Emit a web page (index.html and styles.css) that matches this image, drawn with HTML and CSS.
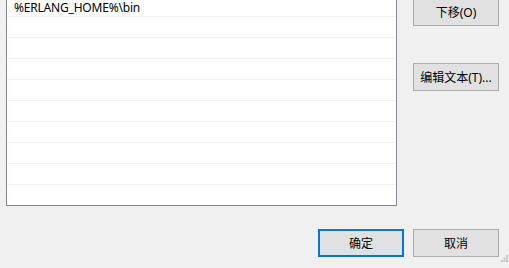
FILE: index.html
```html
<!DOCTYPE html>
<html lang="zh-CN">
<head>
<meta charset="utf-8">
<title>编辑环境变量</title>
<link rel="stylesheet" href="styles.css">
</head>
<body>
<div class="dialog">
  <div class="main">
    <div class="list">
      <div class="row">%ERLANG_HOME%\bin</div>
      <div class="row"></div>
      <div class="row"></div>
      <div class="row"></div>
      <div class="row"></div>
      <div class="row"></div>
      <div class="row"></div>
      <div class="row"></div>
      <div class="row"></div>
      <div class="row"></div>
    </div>
    <div class="side">
      <button class="btn">下移(O)</button>
      <button class="btn">编辑文本(T)...</button>
    </div>
  </div>
  <div class="footer">
    <button class="btn btn-default">确定</button>
    <button class="btn">取消</button>
  </div>
  <svg class="grip" width="7" height="7" viewBox="0 0 7 7">
    <rect x="5" y="0" width="2" height="2" fill="#c4c4c4"/>
    <rect x="2.5" y="2.5" width="2" height="2" fill="#c4c4c4"/>
    <rect x="5" y="2.5" width="2" height="2" fill="#c4c4c4"/>
    <rect x="0" y="5" width="2" height="2" fill="#c4c4c4"/>
    <rect x="2.5" y="5" width="2" height="2" fill="#c4c4c4"/>
    <rect x="5" y="5" width="2" height="2" fill="#c4c4c4"/>
  </svg>
</div>
</body>
</html>
```

FILE: styles.css
```css
html, body {
  margin: 0;
  padding: 0;
  background: #f0f0f0;
  overflow: hidden;
}

.dialog {
  position: relative;
  width: 509px;
  height: 268px;
  font-family: "Noto Sans", "Noto Sans CJK SC", sans-serif;
  font-size: 12px;
  color: #000;
}

.main {
  display: flex;
  margin-top: -5px;
}

.list {
  margin-left: 6px;
  width: 391px;
  height: 211px;
  box-sizing: border-box;
  border: 1px solid #828790;
  background: #fff;
  overflow: hidden;
}

.row {
  height: 18px;
  padding-top: 2px;
  line-height: 20px;
  border-bottom: 1px solid #f0f0f0;
  padding-left: 7px;
  white-space: nowrap;
  letter-spacing: -0.2px;
}

.side {
  display: flex;
  flex-direction: column;
  gap: 37px;
  margin-left: 16px;
  padding-top: 3px;
}

.btn {
  width: 86px;
  height: 28px;
  box-sizing: border-box;
  border: 1px solid #adadad;
  background: #e1e1e1;
  font-family: "Noto Sans", "Noto Sans CJK SC", sans-serif;
  font-size: 12px;
  color: #000;
  padding: 0;
  margin: 0;
}

.btn-default {
  border: 2px solid #0078d7;
}

.footer {
  display: flex;
  justify-content: flex-end;
  gap: 9px;
  padding-right: 10px;
  margin-top: 23px;
}

.grip {
  position: absolute;
  right: 1px;
  bottom: 1px;
}
```
